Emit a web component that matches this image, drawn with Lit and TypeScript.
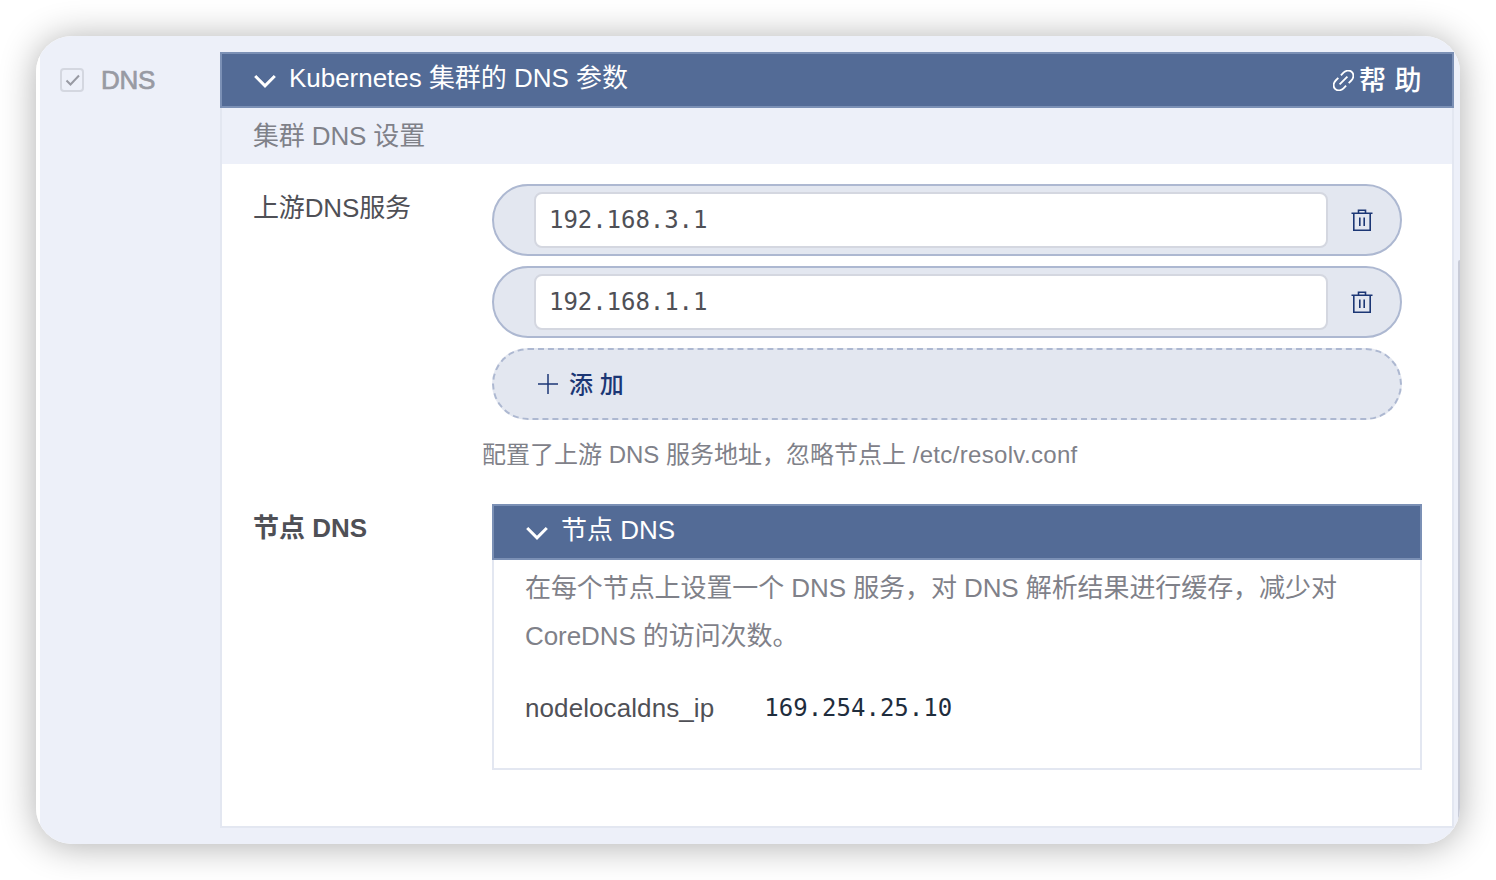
import { LitElement, html, css, svg } from "lit";
import { customElement, property } from "lit/decorators.js";

const chevron = svg`<path d="M1.2 2 L11 11.8 L20.8 2" fill="none" stroke="#fff" stroke-width="3"/>`;

@customElement("collapse-bar")
class CollapseBar extends LitElement {
  @property() label = "";
  static styles = css`
    :host { display: block; }
    .bar {
      box-sizing: border-box; height: 56px; display: flex; align-items: flex-start;
      border: 2px solid #7b90b5; background: #536b96; color: #fff;
      padding: 0 30px 0 32px; font-size: 26px; line-height: 48px;
    }
    .chev { width: 23px; height: 15px; margin: 20px 12px 0 0; flex: none; }
    .label { flex: 1; white-space: nowrap; letter-spacing: -0.03px; }
  `;
  render() {
    return html`<div class="bar">
      <svg class="chev" viewBox="0 0 23 15">${chevron}</svg>
      <span class="label">${this.label}</span><slot></slot>
    </div>`;
  }
}

@customElement("server-row")
class ServerRow extends LitElement {
  @property() value = "";
  static styles = css`
    :host { display: block; }
    .pill {
      box-sizing: border-box; height: 72px; border: 2px solid #adb8d1; border-radius: 36px;
      background: #e3e7f0; display: flex; align-items: center; padding: 0 27px 0 40px;
    }
    .field {
      box-sizing: border-box; flex: 1; height: 56px; border: 2px solid #d4d7e0; border-radius: 8px;
      background: #fff; color: #4f5056; padding: 0 13px; line-height: 53px;
      font-family: "DejaVu Sans Mono", monospace; font-size: 24px; letter-spacing: -0.05px;
    }
    .trash { width: 22px; height: 24px; margin-left: 23px; flex: none; }
  `;
  render() {
    return html`<div class="pill">
      <div class="field">${this.value}</div>
      <svg class="trash" viewBox="0 0 22 24" fill="none" stroke="#1c3775" stroke-width="1.6">
        <path d="M0.5 5.3H21.5M7.5 5.3V2.3H14.5V5.3M2.8 5.3V22.3H19.2V5.3M8.8 9.5V18M13.2 9.5V18"/>
      </svg>
    </div>`;
  }
}

@customElement("app-root")
class AppRoot extends LitElement {
  static styles = css`
    :host {
      display: block; box-sizing: border-box; width: 1496px; height: 880px; padding: 36px;
      background: #fff; overflow: hidden;
      font-family: "Liberation Sans", "Noto Sans CJK SC", sans-serif; font-size: 26px;
      color: #4f5056;
    }
    .card {
      height: 808px; border-radius: 36px; overflow: hidden; display: flex;
      background: linear-gradient(to right, #fff 4px, #edf0f9 4px); padding-left: 4px; box-sizing: border-box;
    }
    .shadow { border-radius: 36px; box-shadow: 0 2px 36px rgba(0, 0, 0, 0.32); }
    .side { width: 180px; flex: none; box-sizing: border-box; padding: 24px 0 0 20px; display: flex; gap: 17px; align-items: flex-start; }
    .check { width: 24px; height: 24px; margin-top: 8px; flex: none; }
    .side-label { line-height: 40px; color: #989aa3; letter-spacing: -0.3px; -webkit-text-stroke: 0.7px #989aa3; }
    .panel { width: 1234px; height: 776px; margin-top: 16px; flex: none; background: #fff; display: flex; flex-direction: column; box-shadow: inset 0 0 0 2px #e3e7f1; }
    .scroll { width: 2px; height: 584px; margin: 224px 0 0 4px; background: #c8cbd7; border-radius: 2px 0 0 0; }
    .help { display: flex; align-items: center; height: 52px; font-weight: 500; gap: 5px; }
    .help-text { line-height: 52px; padding-top: 2px; white-space: pre; font-size: 27px; letter-spacing: 0.5px; }
    .link { width: 21px; height: 21px; }
    .sub { height: 56px; margin: 0 2px; background: #edf0f9; padding-left: 31px; line-height: 57px; color: #7f8189; letter-spacing: -0.15px; }
    .form { padding: 20px 32px 0 33px; display: grid; grid-template-columns: 239px 930px; }
    .name { line-height: 48px; white-space: nowrap; letter-spacing: -0.15px; }
    .strong { font-weight: 700; letter-spacing: 0; }
    .rows { width: 910px; display: flex; flex-direction: column; gap: 10px; }
    .add {
      box-sizing: border-box; height: 72px; border: 2px dashed #adb8d1; border-radius: 36px;
      background: #e3e7f0; display: flex; align-items: center; padding-left: 44px; gap: 11px;
      color: #1c3775; font-size: 24px; font-weight: 500;
    }
    .add-text { padding-bottom: 4px; }
    .plus { width: 20px; height: 20px; }
    .hint { margin: 5px 0 0 -10px; line-height: 40px; font-size: 24px; color: #7f8189; white-space: nowrap; }
    .path { letter-spacing: 0.33px; }
    .node { margin-top: 29px; }
    .box { box-sizing: border-box; height: 210px; border: 2px solid #e3e7f1; border-top: 0; padding: 4px 31px 0; }
    .desc { line-height: 48px; color: #7f8189; white-space: nowrap; letter-spacing: -0.08px; }
    .pair { display: flex; margin-top: 24px; line-height: 48px; gap: 50px; }
    .key { letter-spacing: 0.09px; }
    .ip { font-family: "DejaVu Sans Mono", monospace; font-size: 24px; color: #1f2d3d; }
  `;
  render() {
    return html`<div class="shadow"><div class="card">
      <div class="side">
        <svg class="check" viewBox="0 0 24 24" fill="none">
          <rect x="1" y="1" width="22" height="22" rx="3" stroke="#d4d7e0" stroke-width="2"/>
          <path d="M6.5 12.5L10.5 16.5L19 7.5" stroke="#989aa3" stroke-width="2"/>
        </svg>
        <span class="side-label">DNS</span>
      </div>
      <div class="panel">
        <collapse-bar label="Kubernetes 集群的 DNS 参数">
          <span class="help">
            <svg class="link" viewBox="146 146 732 732" fill="#fff"><path d="M715.648 625.152 670.4 579.904l90.496-90.56c75.008-74.944 85.12-186.368 22.656-248.896-62.528-62.464-173.952-52.352-248.96 22.656L444.16 353.6l-45.248-45.248 90.496-90.496c100.032-99.968 251.968-110.08 339.456-22.656 87.488 87.488 77.312 239.424-22.656 339.456l-90.496 90.496zm-90.496 90.496-90.496 90.496C434.624 906.112 282.688 916.224 195.2 828.8c-87.488-87.488-77.312-239.424 22.656-339.456l90.496-90.496 45.248 45.248-90.496 90.56c-75.008 74.944-85.12 186.368-22.656 248.896 62.528 62.464 173.952 52.352 248.96-22.656l90.496-90.496zm0-362.048 45.248 45.248L398.848 670.4 353.6 625.152z"/></svg>
            <span class="help-text">帮 助</span>
          </span>
        </collapse-bar>
        <div class="sub">集群 DNS 设置</div>
        <div class="form">
          <div class="name">上游DNS服务</div>
          <div class="rows">
            <server-row value="192.168.3.1"></server-row>
            <server-row value="192.168.1.1"></server-row>
            <div class="add">
              <svg class="plus" viewBox="0 0 20 20" stroke="#1c3775" stroke-width="1.5"><path d="M0 10H20M10 0V20"/></svg>
              <span class="add-text">添 加</span>
            </div>
            <div class="hint">配置了上游 DNS 服务地址，忽略节点上 <span class="path">/etc/resolv.conf</span></div>
          </div>
          <div class="name strong node">节点 DNS</div>
          <div class="node">
            <collapse-bar label="节点 DNS"></collapse-bar>
            <div class="box">
              <div class="desc">在每个节点上设置一个 DNS 服务，对 DNS 解析结果进行缓存，减少对<br>CoreDNS 的访问次数。</div>
              <div class="pair"><span class="key">nodelocaldns_ip</span><span class="ip">169.254.25.10</span></div>
            </div>
          </div>
        </div>
      </div>
      <div class="scroll"></div>
    </div></div>`;
  }
}
